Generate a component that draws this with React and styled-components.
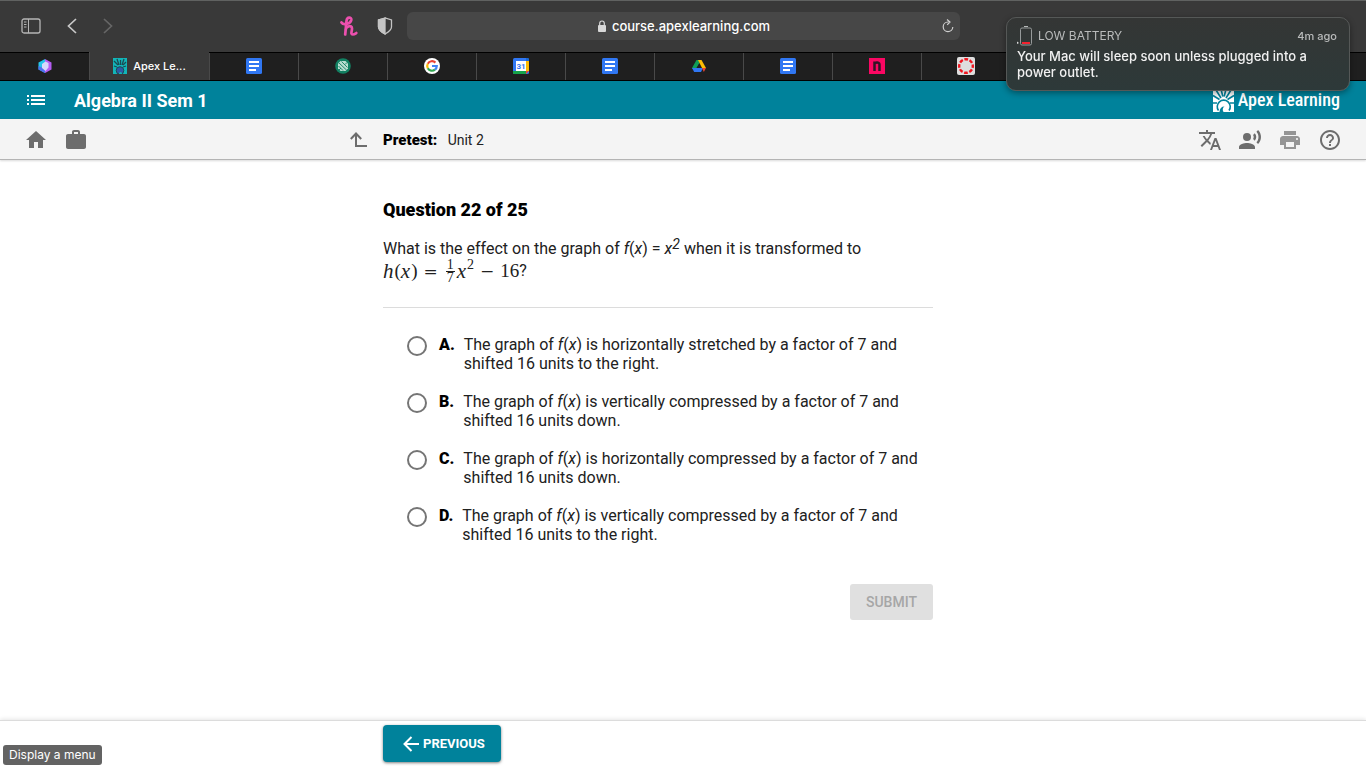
import styled, { createGlobalStyle, css } from 'styled-components';
import { MdHome, MdWork, MdTranslate, MdRecordVoiceOver, MdPrint, MdHelpOutline } from 'react-icons/md';

const answers = [
  { letter: 'A', effect: 'horizontally stretched', shift: '16 units to the right' },
  { letter: 'B', effect: 'vertically compressed', shift: '16 units down' },
  { letter: 'C', effect: 'horizontally compressed', shift: '16 units down' },
  { letter: 'D', effect: 'vertically compressed', shift: '16 units to the right' },
];

const CubeIcon = () => (
  <svg width="14" height="16" viewBox="0 0 14 16">
    <path d="M7 1 .5 4.500v7L7 15z" fill="#24c5ea" />
    <path d="M7 1v14l6.500-3.500v-7z" fill="#b45cf2" />
    <path d="M.5 8v3.500L7 15v-4z" fill="#4f6fee" />
    <path d="M7.500 3.500 4 6v4l3.500 3 3-3.500V5z" fill="#d5d8fb" />
  </svg>
);

const ApexIcon = () => (
  <svg width="14" height="16" viewBox="0 0 14 16">
    <path fill="#12b5b8" d="M0 0h14v16H0z" />
    <path d="M1 3l4 4M4 1l2 6M7.500 2v5M11 1 9 7M13 4l-3 3M1 8l3 1M13 8l-3 1" stroke="#1c4a52" strokeWidth="1.300" />
    <circle cx="7" cy="12.500" r="3.800" fill="#2f59a5" stroke="#1c4a52" />
    <circle cx="7.500" cy="15.500" r="1.500" fill="#12b5b8" />
  </svg>
);

const DocsIcon = () => (
  <svg width="16" height="16" viewBox="0 0 16 16">
    <rect width="16" height="16" rx="1.500" fill="#3077f3" />
    <path d="M3 4h10M3 8h10M3 12h7" stroke="#fff" strokeWidth="2" />
  </svg>
);

const KnotIcon = () => (
  <svg width="16" height="16" viewBox="0 0 16 16">
    <circle cx="8" cy="8" r="7.800" fill="#128062" />
    <path d="M5.500 3h5L13 5.500v5L10.500 13h-5L3 10.500v-5z" fill="#b9ddd0" />
    <path d="m4 5 7.500 7M6.500 3.500l6 6M3.500 8l4.500 4.500M12 4.500 10 6.500M6 10l-2 2" stroke="#128062" strokeWidth=".9" />
  </svg>
);

const GoogleIcon = () => (
  <svg width="16" height="16" viewBox="0 0 16 16">
    <circle cx="8" cy="8" r="8" fill="#fff" />
    <g fill="none" strokeWidth="2.200">
      <path d="M11.400 4.600A4.800 4.800 0 0 0 3.800 5.700" stroke="#ea4335" />
      <path d="M3.800 5.700a4.800 4.800 0 0 0 0 4.600" stroke="#fbbc05" />
      <path d="M3.800 10.300a4.800 4.800 0 0 0 7.200 1.400" stroke="#34a853" />
      <path d="M11 11.700A4.800 4.800 0 0 0 12.800 8H8" stroke="#4285f4" />
    </g>
  </svg>
);

const CalendarIcon = () => (
  <svg width="16" height="16" viewBox="0 0 16 16">
    <rect width="16" height="16" rx="1.500" fill="#3077f3" />
    <path fill="#1967d2" d="M13 0h1.500A1.500 1.500 0 0 1 16 1.500V3h-3z" />
    <path fill="#fbbc04" d="M13 3h3v10h-3z" />
    <path fill="#16a34a" d="M0 13h13v3H1.500A1.500 1.500 0 0 1 0 14.500z" />
    <path fill="#ea4335" d="M13 13h3l-3 3z" />
    <path fill="#fff" d="M3 3h10v10H3z" />
    <text x="8" y="11" textAnchor="middle" fontFamily="Roboto, sans-serif" fontWeight="700" fontSize="8" fill="#3077f3">31</text>
  </svg>
);

const DriveIcon = () => (
  <svg width="16" height="16" viewBox="0 0 16 16">
    <path fill="#109d58" d="M5.500 2H8l.500 3-4.800 8L1 10z" />
    <path fill="#fbbc04" d="M7 2h3.500L15 10h-4z" />
    <path fill="#3077f3" d="M4.500 10H12l-2 4H3.200L1 10z" />
    <path fill="#ea4335" d="M11 10h4l-2.200 4z" />
    <path fill="#1f1f1f" d="m8 6 2.300 4H5.700z" />
  </svg>
);

const NIcon = () => (
  <svg width="16" height="16" viewBox="0 0 16 16">
    <path fill="#fb0763" d="M0 0h16v16H0z" />
    <path d="M5.500 13V3.500M5.500 6c0-1.500 5-2.500 5 .500V13" stroke="#331426" strokeWidth="2.500" fill="none" />
  </svg>
);

const CanvasIcon = () => (
  <svg width="18" height="18" viewBox="0 0 18 18">
    <rect width="18" height="18" rx="2" fill="#dedede" />
    <circle cx="9" cy="9" r="6.800" fill="none" stroke="#f0141e" strokeWidth="2.400" strokeDasharray="3.740 1.600" strokeDashoffset="1.870" />
  </svg>
);

const SidebarIcon = () => (
  <svg width="20" height="16" viewBox="0 0 20 16" fill="none" stroke="#b5b5b5">
    <rect x="1" y="1" width="18" height="14" rx="2" strokeWidth="1.300" />
    <path d="M7.500 1v14M3 4h2.500M3 6.500h2.500M3 9h2.500" />
  </svg>
);

const Chevron = ({ forward }) => (
  <svg width="10" height="16" viewBox="0 0 10 16" fill="none" stroke="currentColor" strokeWidth="1.700">
    <path d={forward ? 'm1 1 7.500 7L1 15' : 'M9 1 1.500 8 9 15'} />
  </svg>
);

const HoneyIcon = () => (
  <svg width="18" height="20" viewBox="0 0 18 20" fill="none" stroke="#ec50ae" strokeWidth="2.700" strokeLinecap="round">
    <path d="M1.500 6.500c1.500 2.500 9 2 9.800-2.500.400-3-4.300-3.500-4.800 1L5.200 18.500M5.500 14c.5-4 6.500-5.500 6.500-1.500 0 3-1.800 6 .8 6 1.700 0 2.500-.8 3.500-1.500" />
  </svg>
);

const ShieldIcon = () => (
  <svg width="16" height="18" viewBox="0 0 16 18" stroke="#c4c4c4" strokeWidth="1.300">
    <path d="M8 1 1.500 3v7c0 3 3 5 6.500 7 3.500-2 6.500-4 6.500-7V3z" fill="none" />
    <path d="M8 1 1.500 3v7c0 3 3 5 6.500 7z" fill="#c4c4c4" />
  </svg>
);

const LockIcon = () => (
  <svg width="10" height="12" viewBox="0 0 10 12">
    <rect x="1" y="5" width="8" height="7" rx="1" fill="#d8d8d8" />
    <path d="M2.700 5.500V3.300a2.300 2.300 0 0 1 4.600 0v2.200" fill="none" stroke="#d8d8d8" strokeWidth="1.200" />
  </svg>
);

const ReloadIcon = () => (
  <svg width="12" height="14" viewBox="0 0 12 14" fill="none" stroke="#cfcfcf" strokeWidth="1.200">
    <path d="M6.500 3H6a4.800 4.800 0 1 0 4.800 5M5 .5 8 3 5.200 5.800" />
  </svg>
);

const MenuIcon = () => (
  <svg width="18" height="12" viewBox="0 0 18 12" fill="none" stroke="currentColor" strokeWidth="2">
    <path d="M0 2h2M0 6h2M0 10h2M4 2h14M4 6h14M4 10h14" />
  </svg>
);

const UpIcon = () => (
  <svg width="18" height="16" viewBox="0 0 18 16" fill="none" stroke="currentColor" strokeWidth="2">
    <path d="M6 1.500V14h11M.8 7 6 1.500 11.200 7" />
  </svg>
);

const ArrowIcon = () => (
  <svg width="16" height="16" viewBox="0 0 16 16" fill="none" stroke="currentColor" strokeWidth="2">
    <path d="M16 8H1.500M8.500 1 1.500 8l7 7" />
  </svg>
);

const LogoMark = () => (
  <svg width="21" height="23" viewBox="0 0 21 23">
    <path fill="#fff" d="M0 0h21v23H0z" />
    <path
      d="M0 6.500l6.500 4M3 1l5 8M8 0l1.800 7.500M13 0l-1.800 7.500M18 1l-5 8M21 6.500l-6.500 4M0 14h4M21 14h-4"
      stroke="#00829b"
      strokeWidth="1.600"
    />
    <path d="M5.500 21.500a6.500 6.500 0 1 1 10.500 0" stroke="#00829b" strokeWidth="1.600" fill="#fff" />
    <path d="M6.500 23c.2-3.500 2-5.500 5-5.500-2 1.200-2.200 3.500-1 5.500z" fill="#00829b" />
  </svg>
);

const BatteryIcon = () => (
  <svg width="16" height="20" viewBox="0 0 16 20">
    <rect x="3.500" y="2" width="11" height="17" rx="1.500" fill="none" stroke="#969a9a" />
    <path d="M7 .5h4" stroke="#b8bbbb" />
    <path d="M5 17h8" stroke="#f5222f" strokeWidth="2" />
    <path d="m0 15.500 2 1.500-2 1z" fill="#ddd" />
  </svg>
);

const tabs = [
  { name: 'Cube', icon: <CubeIcon /> },
  { name: 'Apex Learning', icon: <ApexIcon />, title: 'Apex Le...' },
  { name: 'Document', icon: <DocsIcon /> },
  { name: 'Chat', icon: <KnotIcon /> },
  { name: 'Google', icon: <GoogleIcon /> },
  { name: 'Calendar', icon: <CalendarIcon /> },
  { name: 'Document', icon: <DocsIcon /> },
  { name: 'Drive', icon: <DriveIcon /> },
  { name: 'Document', icon: <DocsIcon /> },
  { name: 'N', icon: <NIcon /> },
  { name: 'Canvas', icon: <CanvasIcon /> },
];

const Fx = () => (
  <>
    <i>f</i>(<i>x</i>)
  </>
);

const App = () => {
  return (
    <Page>
      <GlobalStyle />
      <BrowserBar>
        <NavButtons>
          <IconButton aria-label="Sidebar"><SidebarIcon /></IconButton>
          <IconButton aria-label="Back"><Chevron /></IconButton>
          <IconButton aria-label="Forward" disabled><Chevron forward /></IconButton>
        </NavButtons>
        <Extensions>
          <IconButton aria-label="Honey"><HoneyIcon /></IconButton>
          <IconButton aria-label="Privacy report"><ShieldIcon /></IconButton>
        </Extensions>
        <AddressBar>
          <Address>
            <LockIcon />
            course.apexlearning.com
          </Address>
          <IconButton aria-label="Reload"><ReloadIcon /></IconButton>
        </AddressBar>
      </BrowserBar>
      <Tabs>
        {tabs.map((tab, i) => (
          <Tab key={i} $active={!!tab.title} aria-label={tab.name}>
            {tab.icon}
            {tab.title}
          </Tab>
        ))}
      </Tabs>

      <Header>
        <IconButton aria-label="Display a menu"><MenuIcon /></IconButton>
        <CourseName>Algebra II Sem 1</CourseName>
        <Logo href="#">
          <LogoMark />
          Apex Learning
        </Logo>
      </Header>

      <Toolbar>
        <ToolGroup>
          <IconButton aria-label="Home"><MdHome size={24} /></IconButton>
          <IconButton aria-label="Portfolio"><MdWork size={24} /></IconButton>
        </ToolGroup>
        <Crumb>
          <IconButton aria-label="Up"><UpIcon /></IconButton>
          <p><b>Pretest:</b> Unit 2</p>
        </Crumb>
        <ToolGroup $end>
          <IconButton aria-label="Translate"><MdTranslate size={24} /></IconButton>
          <IconButton aria-label="Read aloud"><MdRecordVoiceOver size={24} /></IconButton>
          <IconButton aria-label="Print" $faded><MdPrint size={24} /></IconButton>
          <IconButton aria-label="Help"><MdHelpOutline size={24} /></IconButton>
        </ToolGroup>
      </Toolbar>

      <Main>
        <Column>
          <h1>Question 22 of 25</h1>
          <Question>
            <p>
              What is the effect on the graph of <Fx /> = <i>x</i><sup>2</sup> when it is transformed to
            </p>
            <Formula>
              <i>h</i>(<i>x</i>)<Operator>=</Operator>
              <Fraction><span>1</span><span>7</span></Fraction>
              <i>x</i><sup>2</sup><Operator>−</Operator>16<Mark>?</Mark>
            </Formula>
          </Question>
          <AnswerList>
            {answers.map(answer => (
              <Answer key={answer.letter}>
                <input type="radio" name="answer" value={answer.letter} />
                <strong>{answer.letter}.</strong>
                <p>
                  The graph of <Fx /> is {answer.effect} by a factor of 7 and
                  <br />
                  shifted {answer.shift}.
                </p>
              </Answer>
            ))}
          </AnswerList>
          <Submit disabled>SUBMIT</Submit>
        </Column>
      </Main>

      <Footer>
        <Column>
          <Previous><ArrowIcon />PREVIOUS</Previous>
        </Column>
      </Footer>

      <StatusTip>Display a menu</StatusTip>
      <Notification>
        <NoticeHead>
          <BatteryIcon />
          <span>LOW BATTERY</span>
          <time>4m ago</time>
        </NoticeHead>
        <p>Your Mac will sleep soon unless plugged into a power outlet.</p>
      </Notification>
    </Page>
  );
};

export default App;

const GlobalStyle = createGlobalStyle`
  * {
    box-sizing: border-box;
  }
  body {
    margin: 0;
    background: #fff;
    color: #212121;
    font-family: Roboto, sans-serif;
    font-size: 16px;
    line-height: 19px;
  }
  h1, p {
    margin: 0;
  }
  button {
    font-family: inherit;
    border: 0;
  }
  svg {
    display: block;
    flex-shrink: 0;
  }
`;

const Page = styled.div`
  min-height: 100vh;
  display: flex;
  flex-direction: column;
`;

const IconButton = styled.button`
  display: flex;
  padding: 0;
  background: none;
  color: inherit;
  opacity: ${props => (props.$faded ? 0.7 : 1)};
  &:disabled {
    color: #666;
  }
`;

const BrowserBar = styled.div`
  display: flex;
  align-items: center;
  height: 52px;
  padding: 0 0 2px 21px;
  border-top: 1px solid #606261;
  background: #393939;
  color: #c8c8c8;
`;

const NavButtons = styled.div`
  display: flex;
  align-items: center;
  gap: 26px;
  flex: 0 0 319px;
`;

const Extensions = styled.div`
  display: flex;
  align-items: center;
  gap: 19px;
  flex: 0 0 67px;
`;

const AddressBar = styled.div`
  display: flex;
  align-items: center;
  flex: 0 1 553px;
  height: 28px;
  padding-right: 6px;
  border-radius: 6px;
  background: #474747;
`;

const Address = styled.div`
  flex: 1;
  display: flex;
  align-items: center;
  justify-content: center;
  gap: 5px;
  padding-left: 18px;
  color: #fff;
  font: 500 13px/16px Inter, sans-serif;
`;

const Tabs = styled.nav`
  display: flex;
  height: 29px;
  border: solid #000;
  border-width: 1px 0;
  background: #1f1f1f;
`;

const Tab = styled.button`
  display: flex;
  align-items: center;
  justify-content: center;
  gap: 6px;
  flex: 0 0 89px;
  padding: 0 0 1px;
  background: none;
  color: #fff;
  font: 500 11px/14px Inter, sans-serif;
  & + & {
    border-left: 1px solid #494949;
  }
  ${props =>
    props.$active &&
    css`
      flex-basis: 120px;
      margin-top: -1px;
      background: #393939;
    `}
`;

const Header = styled.header`
  display: flex;
  align-items: center;
  height: 38px;
  padding: 0 26px 0 27px;
  background: #00829b;
  color: #fff;
`;

const CourseName = styled.div`
  margin-left: 29px;
  font-size: 18px;
  font-weight: 700;
`;

const Logo = styled.a`
  display: flex;
  align-items: center;
  gap: 4px;
  margin-left: auto;
  color: #fff;
  font: 500 18px/24px 'Roboto Condensed', 'Liberation Sans Narrow', Roboto, sans-serif;
  text-decoration: none;
`;

const Toolbar = styled.div`
  display: grid;
  grid-template-columns: 1fr 600px 1fr;
  align-items: center;
  height: 41px;
  padding: 2px 24px 0;
  border-bottom: 1px solid #b4b4b4;
  box-shadow: 0 1px 2px rgba(0, 0, 0, 0.15);
  background: #f4f4f4;
  color: #6d6d6d;
`;

const ToolGroup = styled.div`
  display: flex;
  gap: 16px;
  justify-content: ${props => (props.$end ? 'flex-end' : 'flex-start')};
`;

const Crumb = styled.div`
  display: flex;
  align-items: center;
  gap: 15px;
  margin-left: -33px;
  color: #212121;
  font-size: 14px;
  button {
    color: #6d6d6d;
  }
  b {
    margin-right: 7px;
    color: #000;
    font-size: 15px;
    font-weight: 900;
  }
`;

const Main = styled.main`
  flex: 1;
  padding-top: 40px;
`;

const Column = styled.div`
  width: 600px;
  margin: 0 auto;
  padding-right: 50px;
  h1 {
    font-size: 18px;
    font-weight: 900;
    color: #000;
  }
`;

const Question = styled.div`
  margin-top: 20px;
  padding-bottom: 24px;
  border-bottom: 1px solid #dcdcdc;
  sup {
    font-size: 14px;
    line-height: 0;
    font-style: italic;
    vertical-align: 5px;
  }
`;

const Formula = styled.div`
  display: flex;
  align-items: center;
  height: 25px;
  font: 19px/22px 'Liberation Serif', serif;
  i {
    margin: 0 1px 0 0;
    font-size: 21px;
  }
  && sup {
    align-self: flex-start;
    font-size: 14px;
    line-height: 14px;
    font-style: normal;
  }
`;

const Operator = styled.span`
  margin: 0 6px;
  font: 17px/22px 'DejaVu Serif', serif;
`;

const Fraction = styled.span`
  display: flex;
  flex-direction: column;
  align-items: center;
  margin: 2px 2px 0;
  font-size: 14px;
  line-height: 12px;
  span:first-child {
    padding: 0 1px;
    border-bottom: 1px solid #212121;
  }
`;

const Mark = styled.span`
  font: 16px/22px Roboto, sans-serif;
`;

const AnswerList = styled.div`
  display: flex;
  flex-direction: column;
  gap: 19px;
  padding: 27px 0 0 24px;
`;

const Answer = styled.label`
  display: flex;
  align-items: flex-start;
  input {
    appearance: none;
    width: 20px;
    height: 20px;
    margin: 1px 12px 0 0;
    border: 2px solid #757575;
    border-radius: 50%;
  }
  input:checked {
    background: #00829b;
  }
  strong {
    margin-right: 9px;
    color: #000;
    font-weight: 900;
  }
`;

const Submit = styled.button`
  display: block;
  height: 36px;
  margin: 40px 0 0 auto;
  padding: 0 16px;
  border-radius: 3px;
  background: #e0e0e0;
  color: #a6a6a6;
  font-size: 14px;
  font-weight: 500;
`;

const Footer = styled.footer`
  height: 48px;
  padding-top: 4px;
  border-top: 1px solid #dcdcdc;
  box-shadow: 0 -1px 4px rgba(0, 0, 0, 0.1);
`;

const Previous = styled.button`
  display: flex;
  align-items: center;
  gap: 4px;
  height: 37px;
  padding: 0 16px 0 20px;
  border-radius: 4px;
  background: #00829b;
  box-shadow: 0 1px 3px rgba(0, 0, 0, 0.5);
  color: #fff;
  font-size: 13px;
  font-weight: 700;
`;

const StatusTip = styled.div`
  position: fixed;
  left: 3px;
  bottom: 3px;
  padding: 2px 6px;
  border-radius: 3px;
  background: #636363;
  color: #fff;
  font: 12px/16px Inter, sans-serif;
`;

const Notification = styled.aside`
  position: fixed;
  top: 17px;
  right: 16px;
  width: 344px;
  padding: 7px 12px 10px 10px;
  border: 1px solid #555857;
  border-radius: 10px;
  background: linear-gradient(#343635, #2d3939);
  box-shadow: 0 2px 6px rgba(0, 0, 0, 0.4);
  color: #f1f1f1;
  font: 500 13px/16px Inter, sans-serif;
`;

const NoticeHead = styled.div`
  display: flex;
  align-items: center;
  gap: 5px;
  height: 22px;
  margin-bottom: 1px;
  color: #b9bbbb;
  font-size: 12px;
  font-weight: 400;
  time {
    margin-left: auto;
    font-size: 11px;
    font-weight: 500;
  }
`;
